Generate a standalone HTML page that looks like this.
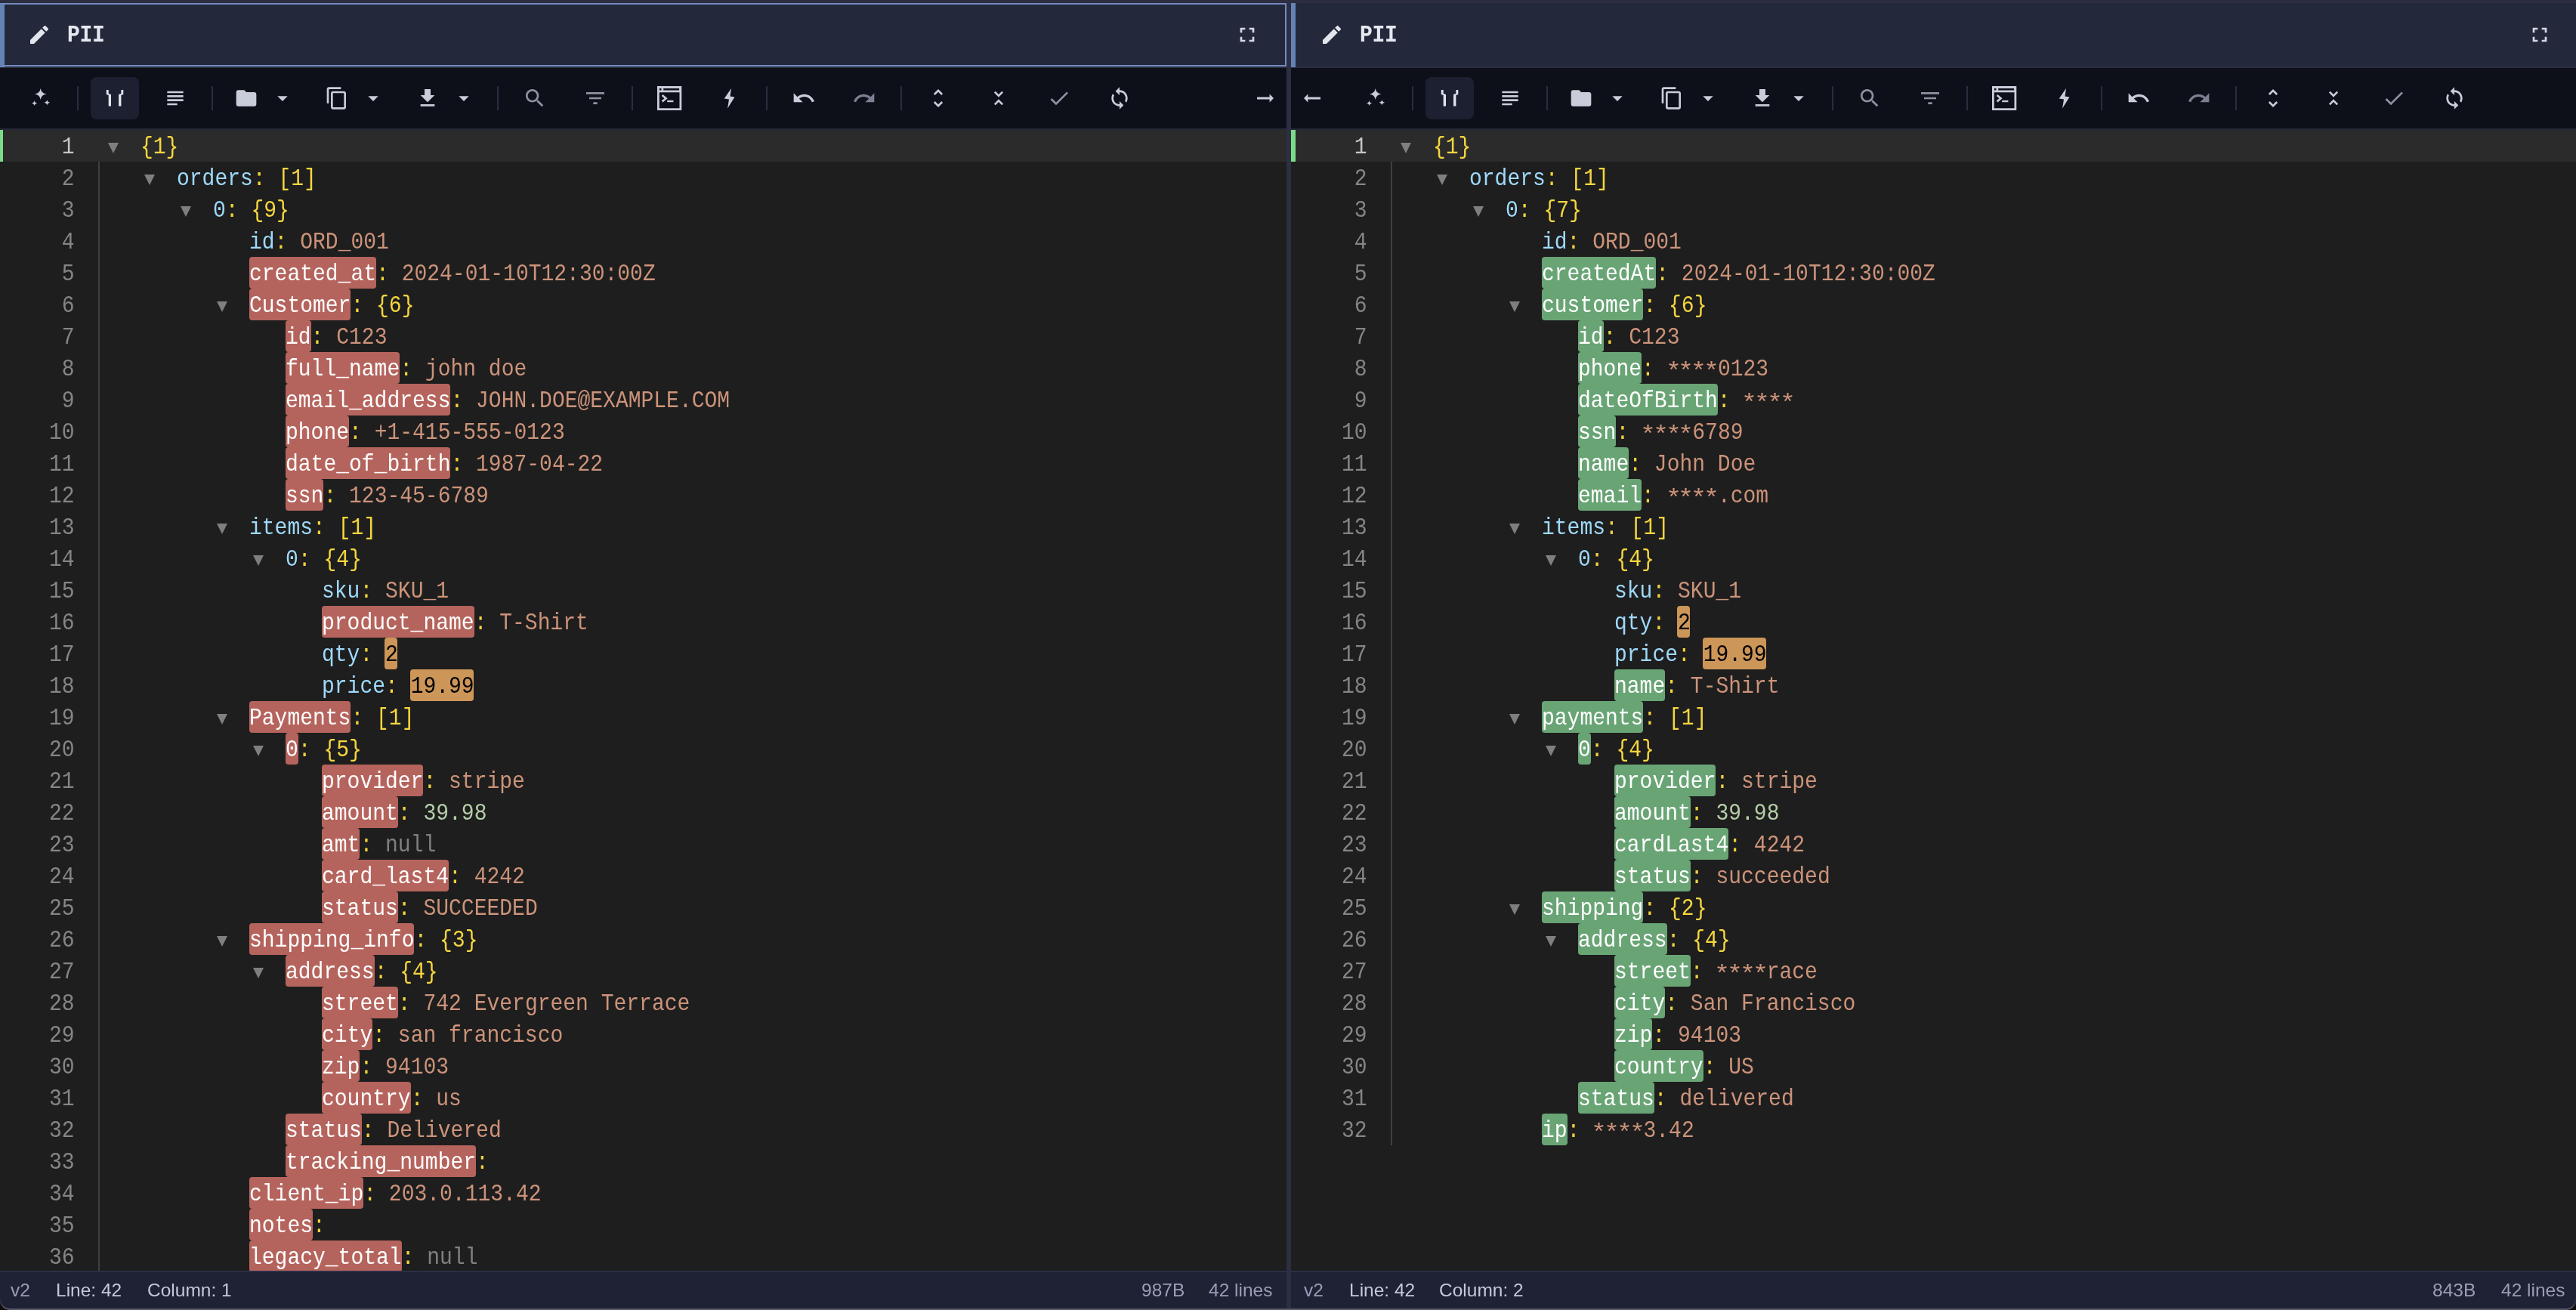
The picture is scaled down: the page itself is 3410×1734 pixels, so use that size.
<!DOCTYPE html>
<html lang="en"><head><meta charset="utf-8"><title>PII</title>
<style>
html,body{margin:0;padding:0}
body{width:3410px;height:1734px;background:#0f0b0a;position:relative;overflow:hidden;
 font-family:"Liberation Mono",monospace;}
#w{position:absolute;left:0;top:0;width:3410px;height:1734px;overflow:hidden;background:#1e1e1e;border-radius:0 0 13px 13px}
#w>div,#w>svg{position:absolute}
#w>.edge{left:0;top:1700px;width:3410px;height:34px;border-radius:0 0 13px 13px;box-shadow:inset 0 -2px 0 #555968,inset 0 0 0 1px rgba(85,89,104,0)}
.topstrip{left:0;top:0;width:3410px;height:4px;background:#2c2e40}
.divider{left:1703px;top:0;width:6px;height:1734px;background:#2c2e41}
/* header */
.hdr{top:4px;height:84px;background:#24283b}
.hdrb{top:88px;height:2px;background:#2b2d40}
.hdrl{top:4px;width:6px;height:85px;background:#6582b4}
.foc{top:4px;height:84px;box-sizing:border-box;border:2px solid #738cbf;border-left:6px solid #6582b4}
.title{top:25px;height:42px;line-height:42px;font-weight:bold;font-size:28px;color:#e6e8f0;letter-spacing:-0.3px;white-space:pre;transform-origin:0 28.44px;transform:translateY(1.8px) scaleY(1.13)}
/* toolbar */
.tb{top:90px;height:80px;background:#0e1019;border-bottom:2px solid #262939}
.sep{top:114px;width:2px;height:32px;background:#2a2d3f}
.abtn{top:102px;width:64px;height:56px;border-radius:8px;background:#1c2031}
/* editor */
.act{top:172px;height:42px;background:#2b2b2b}
.mark{top:172px;height:42px;background:#7bdc88}
.guide{top:214px;width:2px;background:#404040}
.ln{width:98.6px;height:42px;line-height:42px;text-align:right;font-size:28px;color:#858585;transform-origin:0 28.44px;transform:translateY(2.8px) scaleY(1.12)}
.lna{color:#c6c6c6}
.tri{width:0;height:0;border-left:7.2px solid transparent;border-right:7.2px solid transparent;border-top:14px solid #7f7f7f}
.cl{height:42px;line-height:42px;font-size:28px;white-space:pre;color:#d4d4d4;transform-origin:0 28.44px;transform:translateY(2.8px) scaleY(1.12)}
.k{color:#9fd9fa}
.p{color:#f1d33d}
.b{color:#f5d63f}
.s{color:#cc937a}
.n{color:#b5cea8}
.z{color:#808080}
.w{color:#fff}
.bk{color:#000}
.h{height:42px;border-radius:4px}
.hr{background:#b5645d}
.hg{background:#69a475}
.ho{background:#cd9659}
/* status */
.sb{top:1682px;height:52px;background:#1f2235;border-top:2px solid #2c3046;box-sizing:border-box}
.st{top:1684px;height:48px;line-height:48px;font-family:"Liberation Sans",sans-serif;font-size:24.5px;white-space:pre}
.dim{color:#989eb6}
.br{color:#c3c8dc}

.cl,.ln,.st,.title{will-change:transform}
.a{display:inline-block;transform:translateY(3.5px) scale(1.25,1)}

</style></head>
<body>
<div id="w">
<div class="act" style="left:0px;width:1703px"></div>
<div class="mark" style="left:0px;width:4px"></div>
<div class="guide" style="left:130px;height:1468px"></div>
<div class="ln lna" style="top:172px;left:0px">1</div>
<div class="tri" style="top:189px;left:142.8px"></div>
<div class="cl" style="top:172px;left:186px"><span class="b">{1}</span></div>
<div class="ln" style="top:214px;left:0px">2</div>
<div class="tri" style="top:231px;left:190.8px"></div>
<div class="cl" style="top:214px;left:234px"><span class="k">orders</span><span class="p">:</span> <span class="b">[1]</span></div>
<div class="ln" style="top:256px;left:0px">3</div>
<div class="tri" style="top:273px;left:238.8px"></div>
<div class="cl" style="top:256px;left:282px"><span class="k">0</span><span class="p">:</span> <span class="b">{9}</span></div>
<div class="ln" style="top:298px;left:0px">4</div>
<div class="cl" style="top:298px;left:330px"><span class="k">id</span><span class="p">:</span> <span class="s">ORD_001</span></div>
<div class="ln" style="top:340px;left:0px">5</div>
<div class="h hr" style="top:340px;left:330.0px;width:168.0px"></div>
<div class="cl" style="top:340px;left:330px"><span class="w">created_at</span><span class="p">:</span> <span class="s">2024-01-10T12:30:00Z</span></div>
<div class="ln" style="top:382px;left:0px">6</div>
<div class="tri" style="top:399px;left:286.8px"></div>
<div class="h hr" style="top:382px;left:330.0px;width:134.4px"></div>
<div class="cl" style="top:382px;left:330px"><span class="w">Customer</span><span class="p">:</span> <span class="b">{6}</span></div>
<div class="ln" style="top:424px;left:0px">7</div>
<div class="h hr" style="top:424px;left:378.0px;width:33.6px"></div>
<div class="cl" style="top:424px;left:378px"><span class="w">id</span><span class="p">:</span> <span class="s">C123</span></div>
<div class="ln" style="top:466px;left:0px">8</div>
<div class="h hr" style="top:466px;left:378.0px;width:151.2px"></div>
<div class="cl" style="top:466px;left:378px"><span class="w">full_name</span><span class="p">:</span> <span class="s">john doe</span></div>
<div class="ln" style="top:508px;left:0px">9</div>
<div class="h hr" style="top:508px;left:378.0px;width:218.4px"></div>
<div class="cl" style="top:508px;left:378px"><span class="w">email_address</span><span class="p">:</span> <span class="s">JOHN.DOE@EXAMPLE.COM</span></div>
<div class="ln" style="top:550px;left:0px">10</div>
<div class="h hr" style="top:550px;left:378.0px;width:84.0px"></div>
<div class="cl" style="top:550px;left:378px"><span class="w">phone</span><span class="p">:</span> <span class="s">+1-415-555-0123</span></div>
<div class="ln" style="top:592px;left:0px">11</div>
<div class="h hr" style="top:592px;left:378.0px;width:218.4px"></div>
<div class="cl" style="top:592px;left:378px"><span class="w">date_of_birth</span><span class="p">:</span> <span class="s">1987-04-22</span></div>
<div class="ln" style="top:634px;left:0px">12</div>
<div class="h hr" style="top:634px;left:378.0px;width:50.4px"></div>
<div class="cl" style="top:634px;left:378px"><span class="w">ssn</span><span class="p">:</span> <span class="s">123-45-6789</span></div>
<div class="ln" style="top:676px;left:0px">13</div>
<div class="tri" style="top:693px;left:286.8px"></div>
<div class="cl" style="top:676px;left:330px"><span class="k">items</span><span class="p">:</span> <span class="b">[1]</span></div>
<div class="ln" style="top:718px;left:0px">14</div>
<div class="tri" style="top:735px;left:334.8px"></div>
<div class="cl" style="top:718px;left:378px"><span class="k">0</span><span class="p">:</span> <span class="b">{4}</span></div>
<div class="ln" style="top:760px;left:0px">15</div>
<div class="cl" style="top:760px;left:426px"><span class="k">sku</span><span class="p">:</span> <span class="s">SKU_1</span></div>
<div class="ln" style="top:802px;left:0px">16</div>
<div class="h hr" style="top:802px;left:426.0px;width:201.6px"></div>
<div class="cl" style="top:802px;left:426px"><span class="w">product_name</span><span class="p">:</span> <span class="s">T-Shirt</span></div>
<div class="ln" style="top:844px;left:0px">17</div>
<div class="h ho" style="top:844px;left:509.3px;width:16.8px"></div>
<div class="cl" style="top:844px;left:426px"><span class="k">qty</span><span class="p">:</span> <span class="bk">2</span></div>
<div class="ln" style="top:886px;left:0px">18</div>
<div class="h ho" style="top:886px;left:542.9px;width:84.0px"></div>
<div class="cl" style="top:886px;left:426px"><span class="k">price</span><span class="p">:</span> <span class="bk">19.99</span></div>
<div class="ln" style="top:928px;left:0px">19</div>
<div class="tri" style="top:945px;left:286.8px"></div>
<div class="h hr" style="top:928px;left:330.0px;width:134.4px"></div>
<div class="cl" style="top:928px;left:330px"><span class="w">Payments</span><span class="p">:</span> <span class="b">[1]</span></div>
<div class="ln" style="top:970px;left:0px">20</div>
<div class="tri" style="top:987px;left:334.8px"></div>
<div class="h hr" style="top:970px;left:378.0px;width:16.8px"></div>
<div class="cl" style="top:970px;left:378px"><span class="w">0</span><span class="p">:</span> <span class="b">{5}</span></div>
<div class="ln" style="top:1012px;left:0px">21</div>
<div class="h hr" style="top:1012px;left:426.0px;width:134.4px"></div>
<div class="cl" style="top:1012px;left:426px"><span class="w">provider</span><span class="p">:</span> <span class="s">stripe</span></div>
<div class="ln" style="top:1054px;left:0px">22</div>
<div class="h hr" style="top:1054px;left:426.0px;width:100.8px"></div>
<div class="cl" style="top:1054px;left:426px"><span class="w">amount</span><span class="p">:</span> <span class="n">39.98</span></div>
<div class="ln" style="top:1096px;left:0px">23</div>
<div class="h hr" style="top:1096px;left:426.0px;width:50.4px"></div>
<div class="cl" style="top:1096px;left:426px"><span class="w">amt</span><span class="p">:</span> <span class="z">null</span></div>
<div class="ln" style="top:1138px;left:0px">24</div>
<div class="h hr" style="top:1138px;left:426.0px;width:168.0px"></div>
<div class="cl" style="top:1138px;left:426px"><span class="w">card_last4</span><span class="p">:</span> <span class="s">4242</span></div>
<div class="ln" style="top:1180px;left:0px">25</div>
<div class="h hr" style="top:1180px;left:426.0px;width:100.8px"></div>
<div class="cl" style="top:1180px;left:426px"><span class="w">status</span><span class="p">:</span> <span class="s">SUCCEEDED</span></div>
<div class="ln" style="top:1222px;left:0px">26</div>
<div class="tri" style="top:1239px;left:286.8px"></div>
<div class="h hr" style="top:1222px;left:330.0px;width:218.4px"></div>
<div class="cl" style="top:1222px;left:330px"><span class="w">shipping_info</span><span class="p">:</span> <span class="b">{3}</span></div>
<div class="ln" style="top:1264px;left:0px">27</div>
<div class="tri" style="top:1281px;left:334.8px"></div>
<div class="h hr" style="top:1264px;left:378.0px;width:117.6px"></div>
<div class="cl" style="top:1264px;left:378px"><span class="w">address</span><span class="p">:</span> <span class="b">{4}</span></div>
<div class="ln" style="top:1306px;left:0px">28</div>
<div class="h hr" style="top:1306px;left:426.0px;width:100.8px"></div>
<div class="cl" style="top:1306px;left:426px"><span class="w">street</span><span class="p">:</span> <span class="s">742 Evergreen Terrace</span></div>
<div class="ln" style="top:1348px;left:0px">29</div>
<div class="h hr" style="top:1348px;left:426.0px;width:67.2px"></div>
<div class="cl" style="top:1348px;left:426px"><span class="w">city</span><span class="p">:</span> <span class="s">san francisco</span></div>
<div class="ln" style="top:1390px;left:0px">30</div>
<div class="h hr" style="top:1390px;left:426.0px;width:50.4px"></div>
<div class="cl" style="top:1390px;left:426px"><span class="w">zip</span><span class="p">:</span> <span class="s">94103</span></div>
<div class="ln" style="top:1432px;left:0px">31</div>
<div class="h hr" style="top:1432px;left:426.0px;width:117.6px"></div>
<div class="cl" style="top:1432px;left:426px"><span class="w">country</span><span class="p">:</span> <span class="s">us</span></div>
<div class="ln" style="top:1474px;left:0px">32</div>
<div class="h hr" style="top:1474px;left:378.0px;width:100.8px"></div>
<div class="cl" style="top:1474px;left:378px"><span class="w">status</span><span class="p">:</span> <span class="s">Delivered</span></div>
<div class="ln" style="top:1516px;left:0px">33</div>
<div class="h hr" style="top:1516px;left:378.0px;width:252.0px"></div>
<div class="cl" style="top:1516px;left:378px"><span class="w">tracking_number</span><span class="p">:</span></div>
<div class="ln" style="top:1558px;left:0px">34</div>
<div class="h hr" style="top:1558px;left:330.0px;width:151.2px"></div>
<div class="cl" style="top:1558px;left:330px"><span class="w">client_ip</span><span class="p">:</span> <span class="s">203.0.113.42</span></div>
<div class="ln" style="top:1600px;left:0px">35</div>
<div class="h hr" style="top:1600px;left:330.0px;width:84.0px"></div>
<div class="cl" style="top:1600px;left:330px"><span class="w">notes</span><span class="p">:</span></div>
<div class="ln" style="top:1642px;left:0px">36</div>
<div class="h hr" style="top:1642px;left:330.0px;width:201.6px"></div>
<div class="cl" style="top:1642px;left:330px"><span class="w">legacy_total</span><span class="p">:</span> <span class="z">null</span></div>
<div class="act" style="left:1709px;width:1701px"></div>
<div class="mark" style="left:1709px;width:6px"></div>
<div class="guide" style="left:1841px;height:1302px"></div>
<div class="ln lna" style="top:172px;left:1711px">1</div>
<div class="tri" style="top:189px;left:1853.8px"></div>
<div class="cl" style="top:172px;left:1897px"><span class="b">{1}</span></div>
<div class="ln" style="top:214px;left:1711px">2</div>
<div class="tri" style="top:231px;left:1901.8px"></div>
<div class="cl" style="top:214px;left:1945px"><span class="k">orders</span><span class="p">:</span> <span class="b">[1]</span></div>
<div class="ln" style="top:256px;left:1711px">3</div>
<div class="tri" style="top:273px;left:1949.8px"></div>
<div class="cl" style="top:256px;left:1993px"><span class="k">0</span><span class="p">:</span> <span class="b">{7}</span></div>
<div class="ln" style="top:298px;left:1711px">4</div>
<div class="cl" style="top:298px;left:2041px"><span class="k">id</span><span class="p">:</span> <span class="s">ORD_001</span></div>
<div class="ln" style="top:340px;left:1711px">5</div>
<div class="h hg" style="top:340px;left:2041.0px;width:151.2px"></div>
<div class="cl" style="top:340px;left:2041px"><span class="w">createdAt</span><span class="p">:</span> <span class="s">2024-01-10T12:30:00Z</span></div>
<div class="ln" style="top:382px;left:1711px">6</div>
<div class="tri" style="top:399px;left:1997.8px"></div>
<div class="h hg" style="top:382px;left:2041.0px;width:134.4px"></div>
<div class="cl" style="top:382px;left:2041px"><span class="w">customer</span><span class="p">:</span> <span class="b">{6}</span></div>
<div class="ln" style="top:424px;left:1711px">7</div>
<div class="h hg" style="top:424px;left:2089.0px;width:33.6px"></div>
<div class="cl" style="top:424px;left:2089px"><span class="w">id</span><span class="p">:</span> <span class="s">C123</span></div>
<div class="ln" style="top:466px;left:1711px">8</div>
<div class="h hg" style="top:466px;left:2089.0px;width:84.0px"></div>
<div class="cl" style="top:466px;left:2089px"><span class="w">phone</span><span class="p">:</span> <span class="s"><span class="a">*</span><span class="a">*</span><span class="a">*</span><span class="a">*</span>0123</span></div>
<div class="ln" style="top:508px;left:1711px">9</div>
<div class="h hg" style="top:508px;left:2089.0px;width:184.8px"></div>
<div class="cl" style="top:508px;left:2089px"><span class="w">dateOfBirth</span><span class="p">:</span> <span class="s"><span class="a">*</span><span class="a">*</span><span class="a">*</span><span class="a">*</span></span></div>
<div class="ln" style="top:550px;left:1711px">10</div>
<div class="h hg" style="top:550px;left:2089.0px;width:50.4px"></div>
<div class="cl" style="top:550px;left:2089px"><span class="w">ssn</span><span class="p">:</span> <span class="s"><span class="a">*</span><span class="a">*</span><span class="a">*</span><span class="a">*</span>6789</span></div>
<div class="ln" style="top:592px;left:1711px">11</div>
<div class="h hg" style="top:592px;left:2089.0px;width:67.2px"></div>
<div class="cl" style="top:592px;left:2089px"><span class="w">name</span><span class="p">:</span> <span class="s">John Doe</span></div>
<div class="ln" style="top:634px;left:1711px">12</div>
<div class="h hg" style="top:634px;left:2089.0px;width:84.0px"></div>
<div class="cl" style="top:634px;left:2089px"><span class="w">email</span><span class="p">:</span> <span class="s"><span class="a">*</span><span class="a">*</span><span class="a">*</span><span class="a">*</span>.com</span></div>
<div class="ln" style="top:676px;left:1711px">13</div>
<div class="tri" style="top:693px;left:1997.8px"></div>
<div class="cl" style="top:676px;left:2041px"><span class="k">items</span><span class="p">:</span> <span class="b">[1]</span></div>
<div class="ln" style="top:718px;left:1711px">14</div>
<div class="tri" style="top:735px;left:2045.8px"></div>
<div class="cl" style="top:718px;left:2089px"><span class="k">0</span><span class="p">:</span> <span class="b">{4}</span></div>
<div class="ln" style="top:760px;left:1711px">15</div>
<div class="cl" style="top:760px;left:2137px"><span class="k">sku</span><span class="p">:</span> <span class="s">SKU_1</span></div>
<div class="ln" style="top:802px;left:1711px">16</div>
<div class="h ho" style="top:802px;left:2220.3px;width:16.8px"></div>
<div class="cl" style="top:802px;left:2137px"><span class="k">qty</span><span class="p">:</span> <span class="bk">2</span></div>
<div class="ln" style="top:844px;left:1711px">17</div>
<div class="h ho" style="top:844px;left:2253.9px;width:84.0px"></div>
<div class="cl" style="top:844px;left:2137px"><span class="k">price</span><span class="p">:</span> <span class="bk">19.99</span></div>
<div class="ln" style="top:886px;left:1711px">18</div>
<div class="h hg" style="top:886px;left:2137.0px;width:67.2px"></div>
<div class="cl" style="top:886px;left:2137px"><span class="w">name</span><span class="p">:</span> <span class="s">T-Shirt</span></div>
<div class="ln" style="top:928px;left:1711px">19</div>
<div class="tri" style="top:945px;left:1997.8px"></div>
<div class="h hg" style="top:928px;left:2041.0px;width:134.4px"></div>
<div class="cl" style="top:928px;left:2041px"><span class="w">payments</span><span class="p">:</span> <span class="b">[1]</span></div>
<div class="ln" style="top:970px;left:1711px">20</div>
<div class="tri" style="top:987px;left:2045.8px"></div>
<div class="h hg" style="top:970px;left:2089.0px;width:16.8px"></div>
<div class="cl" style="top:970px;left:2089px"><span class="w">0</span><span class="p">:</span> <span class="b">{4}</span></div>
<div class="ln" style="top:1012px;left:1711px">21</div>
<div class="h hg" style="top:1012px;left:2137.0px;width:134.4px"></div>
<div class="cl" style="top:1012px;left:2137px"><span class="w">provider</span><span class="p">:</span> <span class="s">stripe</span></div>
<div class="ln" style="top:1054px;left:1711px">22</div>
<div class="h hg" style="top:1054px;left:2137.0px;width:100.8px"></div>
<div class="cl" style="top:1054px;left:2137px"><span class="w">amount</span><span class="p">:</span> <span class="n">39.98</span></div>
<div class="ln" style="top:1096px;left:1711px">23</div>
<div class="h hg" style="top:1096px;left:2137.0px;width:151.2px"></div>
<div class="cl" style="top:1096px;left:2137px"><span class="w">cardLast4</span><span class="p">:</span> <span class="s">4242</span></div>
<div class="ln" style="top:1138px;left:1711px">24</div>
<div class="h hg" style="top:1138px;left:2137.0px;width:100.8px"></div>
<div class="cl" style="top:1138px;left:2137px"><span class="w">status</span><span class="p">:</span> <span class="s">succeeded</span></div>
<div class="ln" style="top:1180px;left:1711px">25</div>
<div class="tri" style="top:1197px;left:1997.8px"></div>
<div class="h hg" style="top:1180px;left:2041.0px;width:134.4px"></div>
<div class="cl" style="top:1180px;left:2041px"><span class="w">shipping</span><span class="p">:</span> <span class="b">{2}</span></div>
<div class="ln" style="top:1222px;left:1711px">26</div>
<div class="tri" style="top:1239px;left:2045.8px"></div>
<div class="h hg" style="top:1222px;left:2089.0px;width:117.6px"></div>
<div class="cl" style="top:1222px;left:2089px"><span class="w">address</span><span class="p">:</span> <span class="b">{4}</span></div>
<div class="ln" style="top:1264px;left:1711px">27</div>
<div class="h hg" style="top:1264px;left:2137.0px;width:100.8px"></div>
<div class="cl" style="top:1264px;left:2137px"><span class="w">street</span><span class="p">:</span> <span class="s"><span class="a">*</span><span class="a">*</span><span class="a">*</span><span class="a">*</span>race</span></div>
<div class="ln" style="top:1306px;left:1711px">28</div>
<div class="h hg" style="top:1306px;left:2137.0px;width:67.2px"></div>
<div class="cl" style="top:1306px;left:2137px"><span class="w">city</span><span class="p">:</span> <span class="s">San Francisco</span></div>
<div class="ln" style="top:1348px;left:1711px">29</div>
<div class="h hg" style="top:1348px;left:2137.0px;width:50.4px"></div>
<div class="cl" style="top:1348px;left:2137px"><span class="w">zip</span><span class="p">:</span> <span class="s">94103</span></div>
<div class="ln" style="top:1390px;left:1711px">30</div>
<div class="h hg" style="top:1390px;left:2137.0px;width:117.6px"></div>
<div class="cl" style="top:1390px;left:2137px"><span class="w">country</span><span class="p">:</span> <span class="s">US</span></div>
<div class="ln" style="top:1432px;left:1711px">31</div>
<div class="h hg" style="top:1432px;left:2089.0px;width:100.8px"></div>
<div class="cl" style="top:1432px;left:2089px"><span class="w">status</span><span class="p">:</span> <span class="s">delivered</span></div>
<div class="ln" style="top:1474px;left:1711px">32</div>
<div class="h hg" style="top:1474px;left:2041.0px;width:33.6px"></div>
<div class="cl" style="top:1474px;left:2041px"><span class="w">ip</span><span class="p">:</span> <span class="s"><span class="a">*</span><span class="a">*</span><span class="a">*</span><span class="a">*</span>3.42</span></div>
<div class="tb" style="left:0;width:1703px"></div>
<div class="tb" style="left:1709px;width:1701px"></div>
<svg style="left:38px;top:112px" width="32" height="32" viewBox="38 112 32 32"><path fill="#c9ccd9" d="M53.7 116.9 Q54.58 123.664 61.7 124.5 Q54.58 125.336 53.7 132.1 Q52.82 125.336 45.7 124.5 Q52.82 123.664 53.7 116.9ZM45.6 132.9 Q46.029 136.193 49.5 136.6 Q46.029 137.007 45.6 140.3 Q45.171 137.007 41.7 136.6 Q45.171 136.193 45.6 132.9ZM62.3 132 Q62.729 135.293 66.2 135.7 Q62.729 136.107 62.3 139.4 Q61.871 136.107 58.4 135.7 Q61.871 135.293 62.3 132Z"/></svg>
<div class="sep" style="left:102px"></div>
<div class="abtn" style="left:120px"></div>
<svg style="left:136px;top:114px" width="32" height="32" viewBox="136 114 32 32"><path fill="#e2e4ee" d="M140.8 119 h2.9 v5 l3.3 1 v15.6 h-3.3 v-14.6 l-2.9 -0.9zM163.3 119 h-2.9 v5 l-3.3 1 v15.6 h3.3 v-14.6 l2.9 -0.9z"/></svg>
<svg style="left:216px;top:114px" width="32" height="32" viewBox="0 0 24 24"><path fill="#c9ccd9" d="M14 17H4v2h10v-2zm6-8H4v2h16V9zM4 15h16v-2H4v2zM4 5v2h16V5H4z"/></svg>
<div class="sep" style="left:280px"></div>
<svg style="left:310px;top:114px" width="32" height="32" viewBox="0 0 24 24"><path fill="#c9ccd9" d="M10 4H4c-1.1 0-1.99.9-1.99 2L2 18c0 1.1.9 2 2 2h16c1.1 0 2-.9 2-2V8c0-1.1-.9-2-2-2h-8l-2-2z"/></svg>
<svg style="left:358px;top:114px" width="32" height="32" viewBox="0 0 24 24"><path fill="#c9ccd9" d="M7 10l5 5 5-5z"/></svg>
<svg style="left:430px;top:114px" width="32" height="32" viewBox="0 0 24 24"><path fill="#c9ccd9" d="M16 1H4c-1.1 0-2 .9-2 2v14h2V3h12V1zm3 4H8c-1.1 0-2 .9-2 2v14c0 1.1.9 2 2 2h11c1.1 0 2-.9 2-2V7c0-1.1-.9-2-2-2zm0 16H8V7h11v14z"/></svg>
<svg style="left:478px;top:114px" width="32" height="32" viewBox="0 0 24 24"><path fill="#c9ccd9" d="M7 10l5 5 5-5z"/></svg>
<svg style="left:550px;top:114px" width="32" height="32" viewBox="0 0 24 24"><path fill="#c9ccd9" d="M19 9h-4V3H9v6H5l7 7 7-7zM5 18v2h14v-2H5z"/></svg>
<svg style="left:598px;top:114px" width="32" height="32" viewBox="0 0 24 24"><path fill="#c9ccd9" d="M7 10l5 5 5-5z"/></svg>
<div class="sep" style="left:658px"></div>
<svg style="left:692px;top:114px" width="32" height="32" viewBox="0 0 24 24"><path fill="#8d92a3" d="M15.5 14h-.79l-.28-.27C15.41 12.59 16 11.11 16 9.5 16 5.91 13.09 3 9.5 3S3 5.91 3 9.5 5.91 16 9.5 16c1.61 0 3.09-.59 4.23-1.57l.27.28v.79l5 4.99L20.49 19l-4.99-5zm-6 0C7.01 14 5 11.99 5 9.5S7.01 5 9.5 5 14 7.01 14 9.5 11.99 14 9.5 14z"/></svg>
<svg style="left:772px;top:114px" width="32" height="32" viewBox="0 0 24 24"><path fill="#8d92a3" d="M10 18h4v-2h-4v2zM3 6v2h18V6H3zm3 7h12v-2H6v2z"/></svg>
<div class="sep" style="left:836px"></div>
<svg style="left:868px;top:112px" width="36" height="36" viewBox="868 112 36 36"><path fill="#c9ccd9" fill-rule="evenodd" d="M870 114h32.3v32H870z M872.8 122.3h26.7v20.9H872.8z M872.9 116.9h2.6v2.5h-2.6z M878.2 116.9h20.9v2.5h-20.9z"/><path fill="none" stroke="#c9ccd9" stroke-width="2.7" d="M876.6 126l5 4.2l-5 4.2"/><rect fill="#c9ccd9" x="883.2" y="132.8" width="8.2" height="2.4"/></svg>
<svg style="left:950px;top:114px" width="32" height="32" viewBox="950 114 32 32"><path fill="#c9ccd9" d="M968 117.1 L958.7 130.4 L965 131.4 L963.1 143.5 L972.5 128.5 L966.5 127.5Z"/></svg>
<div class="sep" style="left:1014px"></div>
<svg style="left:1048px;top:114px" width="32" height="32" viewBox="0 0 24 24"><path fill="#c9ccd9" d="M12.5 8c-2.65 0-5.05.99-6.9 2.6L2 7v9h9l-3.62-3.62c1.39-1.16 3.16-1.88 5.12-1.88 3.54 0 6.55 2.31 7.6 5.5l2.37-.78C21.08 11.03 17.15 8 12.5 8z"/></svg>
<svg style="left:1128px;top:114px" width="32" height="32" viewBox="0 0 24 24"><path fill="#7c8092" d="M18.4 10.6C16.55 8.99 14.15 8 11.5 8c-4.65 0-8.58 3.03-9.96 7.22L3.9 16c1.05-3.19 4.05-5.5 7.6-5.5 1.95 0 3.73.72 5.12 1.88L13 16h9V7l-3.6 3.6z"/></svg>
<div class="sep" style="left:1192px"></div>
<svg style="left:1226px;top:114px" width="32" height="32" viewBox="0 0 24 24"><path fill="#c9ccd9" d="M12 5.83L15.17 9l1.41-1.41L12 3 7.41 7.59 8.83 9 12 5.83zm0 12.34L8.83 15l-1.41 1.41L12 21l4.59-4.59L15.17 15 12 18.17z"/></svg>
<svg style="left:1306px;top:114px" width="32" height="32" viewBox="0 0 24 24"><path fill="#c9ccd9" d="M7.41 17.59L8.83 19 12 15.83 15.17 19l1.41-1.41L12 13l-4.59 4.59zm9.18-11.18L15.17 5 12 8.17 8.83 5 7.41 6.41 12 11l4.59-4.59z"/></svg>
<svg style="left:1386px;top:114px" width="32" height="32" viewBox="0 0 24 24"><path fill="#8d92a3" d="M9 16.17L4.83 12l-1.42 1.41L9 19 21 7l-1.41-1.41z"/></svg>
<svg style="left:1466px;top:114px" width="32" height="32" viewBox="0 0 24 24"><path fill="#c9ccd9" d="M12 4V1L8 5l4 4V6c3.31 0 6 2.69 6 6 0 1.01-.25 1.97-.7 2.8l1.46 1.46C19.54 15.03 20 13.57 20 12c0-4.42-3.58-8-8-8zm0 14c-3.31 0-6-2.69-6-6 0-1.01.25-1.97.7-2.8L5.24 7.74C4.46 8.97 4 10.43 4 12c0 4.42 3.58 8 8 8v3l4-4-4-4v3z"/></svg>
<svg style="left:1661.9px;top:120px" width="26" height="20" viewBox="1661.9 120 26 20"><path fill="#c9ccd9" d="M1663.9 128.6h16.6v-4.1l5.4 5.5l-5.4 5.5v-4.1h-16.6z"/></svg>
<svg style="left:1805px;top:112px" width="32" height="32" viewBox="1805 112 32 32"><path fill="#c9ccd9" d="M1820.7 116.9 Q1821.58 123.664 1828.7 124.5 Q1821.58 125.336 1820.7 132.1 Q1819.82 125.336 1812.7 124.5 Q1819.82 123.664 1820.7 116.9ZM1812.6 132.9 Q1813.03 136.193 1816.5 136.6 Q1813.03 137.007 1812.6 140.3 Q1812.17 137.007 1808.7 136.6 Q1812.17 136.193 1812.6 132.9ZM1829.3 132 Q1829.73 135.293 1833.2 135.7 Q1829.73 136.107 1829.3 139.4 Q1828.87 136.107 1825.4 135.7 Q1828.87 135.293 1829.3 132Z"/></svg>
<div class="sep" style="left:1869px"></div>
<div class="abtn" style="left:1887px"></div>
<svg style="left:1903px;top:114px" width="32" height="32" viewBox="1903 114 32 32"><path fill="#e2e4ee" d="M1907.8 119 h2.9 v5 l3.3 1 v15.6 h-3.3 v-14.6 l-2.9 -0.9zM1930.3 119 h-2.9 v5 l-3.3 1 v15.6 h3.3 v-14.6 l2.9 -0.9z"/></svg>
<svg style="left:1983px;top:114px" width="32" height="32" viewBox="0 0 24 24"><path fill="#c9ccd9" d="M14 17H4v2h10v-2zm6-8H4v2h16V9zM4 15h16v-2H4v2zM4 5v2h16V5H4z"/></svg>
<div class="sep" style="left:2047px"></div>
<svg style="left:2077px;top:114px" width="32" height="32" viewBox="0 0 24 24"><path fill="#c9ccd9" d="M10 4H4c-1.1 0-1.99.9-1.99 2L2 18c0 1.1.9 2 2 2h16c1.1 0 2-.9 2-2V8c0-1.1-.9-2-2-2h-8l-2-2z"/></svg>
<svg style="left:2125px;top:114px" width="32" height="32" viewBox="0 0 24 24"><path fill="#c9ccd9" d="M7 10l5 5 5-5z"/></svg>
<svg style="left:2197px;top:114px" width="32" height="32" viewBox="0 0 24 24"><path fill="#c9ccd9" d="M16 1H4c-1.1 0-2 .9-2 2v14h2V3h12V1zm3 4H8c-1.1 0-2 .9-2 2v14c0 1.1.9 2 2 2h11c1.1 0 2-.9 2-2V7c0-1.1-.9-2-2-2zm0 16H8V7h11v14z"/></svg>
<svg style="left:2245px;top:114px" width="32" height="32" viewBox="0 0 24 24"><path fill="#c9ccd9" d="M7 10l5 5 5-5z"/></svg>
<svg style="left:2317px;top:114px" width="32" height="32" viewBox="0 0 24 24"><path fill="#c9ccd9" d="M19 9h-4V3H9v6H5l7 7 7-7zM5 18v2h14v-2H5z"/></svg>
<svg style="left:2365px;top:114px" width="32" height="32" viewBox="0 0 24 24"><path fill="#c9ccd9" d="M7 10l5 5 5-5z"/></svg>
<div class="sep" style="left:2425px"></div>
<svg style="left:2459px;top:114px" width="32" height="32" viewBox="0 0 24 24"><path fill="#8d92a3" d="M15.5 14h-.79l-.28-.27C15.41 12.59 16 11.11 16 9.5 16 5.91 13.09 3 9.5 3S3 5.91 3 9.5 5.91 16 9.5 16c1.61 0 3.09-.59 4.23-1.57l.27.28v.79l5 4.99L20.49 19l-4.99-5zm-6 0C7.01 14 5 11.99 5 9.5S7.01 5 9.5 5 14 7.01 14 9.5 11.99 14 9.5 14z"/></svg>
<svg style="left:2539px;top:114px" width="32" height="32" viewBox="0 0 24 24"><path fill="#8d92a3" d="M10 18h4v-2h-4v2zM3 6v2h18V6H3zm3 7h12v-2H6v2z"/></svg>
<div class="sep" style="left:2603px"></div>
<svg style="left:2635px;top:112px" width="36" height="36" viewBox="2635 112 36 36"><path fill="#c9ccd9" fill-rule="evenodd" d="M2637 114h32.3v32H2637z M2639.8 122.3h26.7v20.9H2639.8z M2639.9 116.9h2.6v2.5h-2.6z M2645.2 116.9h20.9v2.5h-20.9z"/><path fill="none" stroke="#c9ccd9" stroke-width="2.7" d="M2643.6 126l5 4.2l-5 4.2"/><rect fill="#c9ccd9" x="2650.2" y="132.8" width="8.2" height="2.4"/></svg>
<svg style="left:2717px;top:114px" width="32" height="32" viewBox="2717 114 32 32"><path fill="#c9ccd9" d="M2735 117.1 L2725.7 130.4 L2732 131.4 L2730.1 143.5 L2739.5 128.5 L2733.5 127.5Z"/></svg>
<div class="sep" style="left:2781px"></div>
<svg style="left:2815px;top:114px" width="32" height="32" viewBox="0 0 24 24"><path fill="#c9ccd9" d="M12.5 8c-2.65 0-5.05.99-6.9 2.6L2 7v9h9l-3.62-3.62c1.39-1.16 3.16-1.88 5.12-1.88 3.54 0 6.55 2.31 7.6 5.5l2.37-.78C21.08 11.03 17.15 8 12.5 8z"/></svg>
<svg style="left:2895px;top:114px" width="32" height="32" viewBox="0 0 24 24"><path fill="#7c8092" d="M18.4 10.6C16.55 8.99 14.15 8 11.5 8c-4.65 0-8.58 3.03-9.96 7.22L3.9 16c1.05-3.19 4.05-5.5 7.6-5.5 1.95 0 3.73.72 5.12 1.88L13 16h9V7l-3.6 3.6z"/></svg>
<div class="sep" style="left:2959px"></div>
<svg style="left:2993px;top:114px" width="32" height="32" viewBox="0 0 24 24"><path fill="#c9ccd9" d="M12 5.83L15.17 9l1.41-1.41L12 3 7.41 7.59 8.83 9 12 5.83zm0 12.34L8.83 15l-1.41 1.41L12 21l4.59-4.59L15.17 15 12 18.17z"/></svg>
<svg style="left:3073px;top:114px" width="32" height="32" viewBox="0 0 24 24"><path fill="#c9ccd9" d="M7.41 17.59L8.83 19 12 15.83 15.17 19l1.41-1.41L12 13l-4.59 4.59zm9.18-11.18L15.17 5 12 8.17 8.83 5 7.41 6.41 12 11l4.59-4.59z"/></svg>
<svg style="left:3153px;top:114px" width="32" height="32" viewBox="0 0 24 24"><path fill="#8d92a3" d="M9 16.17L4.83 12l-1.42 1.41L9 19 21 7l-1.41-1.41z"/></svg>
<svg style="left:3233px;top:114px" width="32" height="32" viewBox="0 0 24 24"><path fill="#c9ccd9" d="M12 4V1L8 5l4 4V6c3.31 0 6 2.69 6 6 0 1.01-.25 1.97-.7 2.8l1.46 1.46C19.54 15.03 20 13.57 20 12c0-4.42-3.58-8-8-8zm0 14c-3.31 0-6-2.69-6-6 0-1.01.25-1.97.7-2.8L5.24 7.74C4.46 8.97 4 10.43 4 12c0 4.42 3.58 8 8 8v3l4-4-4-4v3z"/></svg>
<svg style="left:1724.2px;top:120px" width="26" height="20" viewBox="1724.2 120 26 20"><path fill="#c9ccd9" d="M1748.2 128.6h-16.6v-4.1l-5.4 5.5l5.4 5.5v-4.1h16.6z"/></svg>
<div class="topstrip"></div>
<div class="hdr" style="left:0px;width:1703px"></div>
<div class="hdrb" style="left:0px;width:1703px"></div>
<div class="hdrl" style="left:0px"></div>
<div class="foc" style="left:0px;width:1703px"></div>
<svg style="left:36px;top:30px" width="32" height="32" viewBox="0 0 24 24"><path fill="#e3e5ee" d="M3 17.25V21h3.75L17.81 9.94l-3.75-3.75L3 17.25zM20.71 7.04c.39-.39.39-1.02 0-1.41l-2.34-2.34c-.39-.39-1.02-.39-1.41 0l-1.83 1.83 3.75 3.75 1.83-1.83z"/></svg>
<div class="title" style="left:88.6px">PII</div>
<div class="hdr" style="left:1709px;width:1701px"></div>
<div class="hdrb" style="left:1709px;width:1701px"></div>
<div class="hdrl" style="left:1709px"></div>
<svg style="left:1747px;top:30px" width="32" height="32" viewBox="0 0 24 24"><path fill="#e3e5ee" d="M3 17.25V21h3.75L17.81 9.94l-3.75-3.75L3 17.25zM20.71 7.04c.39-.39.39-1.02 0-1.41l-2.34-2.34c-.39-.39-1.02-.39-1.41 0l-1.83 1.83 3.75 3.75 1.83-1.83z"/></svg>
<div class="title" style="left:1799.6px">PII</div>
<svg style="left:1635px;top:30px" width="32" height="32" viewBox="0 0 24 24"><path fill="#d5d8e4" d="M7 14H5v5h5v-2H7v-3zm-2-4h2V7h3V5H5v5zm12 7h-3v2h5v-5h-2v3zM14 5v2h3v3h2V5h-5z"/></svg>
<svg style="left:3346px;top:30px" width="32" height="32" viewBox="0 0 24 24"><path fill="#d5d8e4" d="M7 14H5v5h5v-2H7v-3zm-2-4h2V7h3V5H5v5zm12 7h-3v2h5v-5h-2v3zM14 5v2h3v3h2V5h-5z"/></svg>
<div class="sb cl_" style="left:0px;width:1703px"></div>
<div class="st dim" style="left:14.4px">v2</div>
<div class="st br" style="left:74.1px">Line: 42</div>
<div class="st br" style="left:194.7px">Column: 1</div>
<div class="st dim" style="left:1511.2px">987B</div>
<div class="st dim" style="left:1600.3px">42 lines</div>
<div class="sb cr_" style="left:1709px;width:1701px"></div>
<div class="st dim" style="left:1725.5px">v2</div>
<div class="st br" style="left:1785.6px">Line: 42</div>
<div class="st br" style="left:1905.2px">Column: 2</div>
<div class="st dim" style="left:3219.6px">843B</div>
<div class="st dim" style="left:3311.4px">42 lines</div>
<div class="divider"></div>
<div class="edge"></div>
</div>
</body></html>
